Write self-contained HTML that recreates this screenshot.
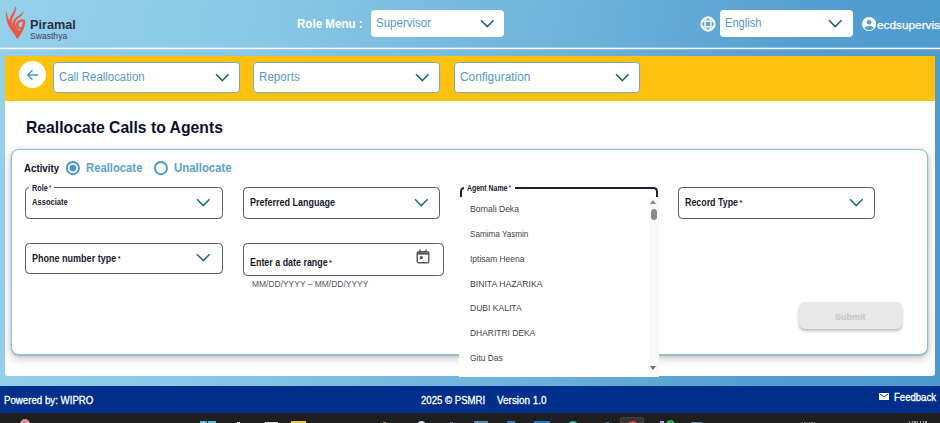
<!DOCTYPE html>
<html><head><meta charset="utf-8">
<style>
*{box-sizing:border-box;margin:0;padding:0}
html,body{width:940px;height:423px;overflow:hidden}
body{font-family:"Liberation Sans",sans-serif;position:relative;background:linear-gradient(100deg,#95d0eb 0%,#8ac8e7 25%,#6fb4db 55%,#559fd0 80%,#4b99cc 100%);}
.a{position:absolute}
.tx{position:absolute;white-space:nowrap;transform-origin:0 50%;line-height:normal}
.sel{position:absolute;background:#fff;border-radius:4px}
.selb{border:1px solid #78aebb}
.field{position:absolute;border:1px solid #5c5f74;border-radius:4.5px;background:#fff;box-shadow:0 0 0.6px 0 rgba(92,95,116,.55)}
</style></head><body>
<div class="a" style="left:0;top:47px;width:940px;height:1px;background:rgba(255,255,255,.3)"></div><div class="a" style="left:0;top:48px;width:940px;height:1px;background:#fff"></div><div class="a" style="left:0;top:49px;width:940px;height:1px;background:rgba(255,255,255,.2)"></div>
<!-- logo -->
<svg class="a" style="left:0;top:2px" width="40" height="42" viewBox="0 0 403 423"><g fill="#ee5540" stroke="#ee5540" stroke-width="5" stroke-linejoin="round">
<path d="M62 98 C58 170 78 235 122 292 C140 315 158 340 176 368 C168 330 150 300 132 272 C100 225 78 170 62 98 Z"/>
<path d="M156 48 C150 95 110 130 96 180 C88 225 108 262 140 296 L158 286 C130 255 112 222 118 182 C128 135 168 100 156 48 Z"/>
<path d="M234 98 C215 135 150 150 132 195 C120 232 138 262 166 292 L184 282 C160 255 144 228 152 198 C166 160 230 145 234 98 Z"/>
<path d="M250 182 C215 172 180 180 166 210 C154 242 172 272 206 272 L208 258 C188 256 178 240 184 220 C192 198 218 192 250 198 Z"/>
<path d="M134 292 L196 288 L178 364 Z" stroke-width="2"/>
<path d="M232 200 L252 196 C252 250 222 305 176 370 C170 350 164 338 158 326 C200 295 230 250 232 200 Z"/>
</g></svg>
<!-- header selects -->
<div class="sel" style="left:370.5px;top:9.8px;width:133.5px;height:27.4px"></div>
<svg class="a" style="left:480px;top:19px" width="15" height="10" viewBox="0 0 15 10"><path d="M1 1.3 L7.3 7.6 L13.6 1.3" fill="none" stroke="#1d6076" stroke-width="1.5"/></svg>
<svg class="a" style="left:699.7px;top:15.5px" width="16" height="16" viewBox="0 0 16 16"><g fill="none" stroke="#fff"><circle cx="8" cy="8" r="6.7" stroke-width="1.8"/><ellipse cx="8" cy="8" rx="2.9" ry="6.7" stroke-width="1.5"/><path d="M2.2 5.3H13.8M2.2 10.7H13.8" stroke-width="1.5"/></g></svg>
<div class="sel" style="left:719.5px;top:9.8px;width:133.5px;height:27.4px"></div>
<svg class="a" style="left:828px;top:19px" width="15" height="10" viewBox="0 0 15 10"><path d="M1 1.3 L7.3 7.6 L13.6 1.3" fill="none" stroke="#1d6076" stroke-width="1.5"/></svg>
<svg class="a" style="left:861.5px;top:17.3px" width="14.2" height="14.2" viewBox="0 0 16 16"><circle cx="8" cy="8" r="8" fill="#fff"/><circle cx="8" cy="6" r="2.7" fill="#57a2d2"/><path d="M2.8 12.3 C4.2 9.6 11.8 9.6 13.2 12.3 C11 15.6 5 15.6 2.8 12.3Z" fill="#57a2d2"/></svg>

<!-- yellow bar -->
<div class="a" style="left:5px;top:56px;width:929.5px;height:45px;background:#fec10e"></div>
<div class="a" style="left:18.7px;top:60.6px;width:27.2px;height:27.2px;border-radius:50%;background:#fff"></div>
<svg class="a" style="left:26.2px;top:69px" width="13" height="12" viewBox="0 0 13 12"><path d="M12 6H2M6.5 1.2L1.7 6L6.5 10.8" fill="none" stroke="#4a93cb" stroke-width="1.4"/></svg>
<div class="sel selb" style="left:53.3px;top:62.2px;width:186.5px;height:31px"></div>
<div class="sel selb" style="left:253.4px;top:62.2px;width:186.5px;height:31px"></div>
<div class="sel selb" style="left:453.5px;top:62.2px;width:186.5px;height:31px"></div>
<svg class="a" style="left:214.6px;top:72.5px" width="15" height="10" viewBox="0 0 15 10"><path d="M1 1.3 L7.3 7.6 L13.6 1.3" fill="none" stroke="#1d6076" stroke-width="1.5"/></svg>
<svg class="a" style="left:414.6px;top:72.5px" width="15" height="10" viewBox="0 0 15 10"><path d="M1 1.3 L7.3 7.6 L13.6 1.3" fill="none" stroke="#1d6076" stroke-width="1.5"/></svg>
<svg class="a" style="left:614.6px;top:72.5px" width="15" height="10" viewBox="0 0 15 10"><path d="M1 1.3 L7.3 7.6 L13.6 1.3" fill="none" stroke="#1d6076" stroke-width="1.5"/></svg>

<!-- white content -->
<div class="a" style="left:5px;top:101px;width:929.5px;height:275px;background:#fff;border-radius:0 0 3px 3px"></div>
<div class="a" style="left:11px;top:149px;width:917px;height:206px;border:1px solid #86bfe0;border-radius:8px;background:#fff;box-shadow:0 1px 2px rgba(0,0,0,.22),0 3px 8px 1px rgba(0,0,0,.2)"></div>
<!-- radios -->
<svg class="a" style="left:65px;top:160px" width="16" height="16" viewBox="0 0 16 16"><circle cx="7.9" cy="8.1" r="6.1" fill="#fff" stroke="#4a96cf" stroke-width="1.9"/><circle cx="7.9" cy="8.1" r="3.4" fill="#4a96cf"/></svg>
<svg class="a" style="left:153px;top:160px" width="16" height="16" viewBox="0 0 16 16"><circle cx="7.9" cy="8.1" r="6.1" fill="#fff" stroke="#4a96cf" stroke-width="1.9"/></svg>

<!-- fields -->
<div class="field" style="left:25px;top:187.2px;width:197.6px;height:32.2px"></div>
<div class="a" style="left:29px;top:186px;width:24.5px;height:4px;background:#fff"></div>
<svg class="a" style="left:195.9px;top:198px" width="15" height="10" viewBox="0 0 15 10"><path d="M1 1.3 L7.3 7.6 L13.6 1.3" fill="none" stroke="#1d6a7c" stroke-width="1.5"/></svg>
<div class="field" style="left:243px;top:187.2px;width:197px;height:32.2px"></div>
<svg class="a" style="left:414px;top:198px" width="15" height="10" viewBox="0 0 15 10"><path d="M1 1.3 L7.3 7.6 L13.6 1.3" fill="none" stroke="#1d6a7c" stroke-width="1.5"/></svg>
<div class="field" style="left:678.2px;top:187.2px;width:197px;height:32.2px"></div>
<svg class="a" style="left:849px;top:198px" width="15" height="10" viewBox="0 0 15 10"><path d="M1 1.3 L7.3 7.6 L13.6 1.3" fill="none" stroke="#1d6a7c" stroke-width="1.5"/></svg>
<div class="field" style="left:25px;top:243.4px;width:197.6px;height:30.2px"></div>
<svg class="a" style="left:195.9px;top:253.2px" width="15" height="10" viewBox="0 0 15 10"><path d="M1 1.3 L7.3 7.6 L13.6 1.3" fill="none" stroke="#1d6a7c" stroke-width="1.5"/></svg>
<div class="field" style="left:243px;top:243.4px;width:201.2px;height:32.3px"></div>
<svg class="a" style="left:416px;top:249.4px" width="14" height="15" viewBox="0 0 14 15"><rect x="1.2" y="2.6" width="11.6" height="11.2" rx="1.6" fill="none" stroke="#555" stroke-width="1.4"/><path d="M1.2 4.4H12.8" stroke="#555" stroke-width="2.4"/><path d="M4 0.6V3M10 0.6V3" stroke="#555" stroke-width="1.5"/><rect x="3.8" y="7.2" width="3" height="3" fill="#555"/></svg>

<!-- agent dropdown -->
<div class="a" style="left:459px;top:189px;width:200px;height:187.5px;background:#fff"></div>
<div class="a" style="left:460px;top:187px;width:198px;height:12px;border:2px solid #1c2140;border-bottom:none;border-radius:4.5px 4.5px 0 0;background:#fff"></div>
<div class="a" style="left:459px;top:196.6px;width:201px;height:4px;background:#fff"></div>
<div class="a" style="left:464.3px;top:185px;width:50.8px;height:5px;background:#fff"></div>
<div class="a" style="left:649px;top:196.6px;width:9.8px;height:179.5px;background:#f9f9f9"></div>
<div class="a" style="left:650.3px;top:199.7px;width:0;height:0;border-left:3.7px solid transparent;border-right:3.7px solid transparent;border-bottom:4.8px solid #8a8a8a"></div>
<div class="a" style="left:650.6px;top:208.9px;width:6.5px;height:11.6px;border-radius:3.2px;background:#8c8c8c"></div>
<div class="a" style="left:650.3px;top:365.7px;width:0;height:0;border-left:3.7px solid transparent;border-right:3.7px solid transparent;border-top:4.8px solid #707070"></div>

<!-- submit -->
<div class="a" style="left:798.7px;top:302px;width:103.3px;height:27px;border-radius:6px;background:#e8e8e8;box-shadow:0 2px 3px rgba(0,0,0,.28)"></div>

<!-- footer -->
<div class="a" style="left:0;top:386px;width:940px;height:27px;background:#002f8b"></div>
<svg class="a" style="left:879.3px;top:393px" width="10.2" height="7.2" viewBox="0 0 10 7"><rect width="10" height="7" rx="0.6" fill="#fff"/><path d="M1 1L5 3.6L9 1" fill="none" stroke="#002f8b" stroke-width="0.9"/></svg>
<!-- taskbar -->
<div class="a" style="left:0;top:413px;width:940px;height:10px;background:#1f1f1f"></div>
<div class="a" style="left:19.8px;top:418.6px;width:10px;height:10px;border-radius:50%;background:#e98aa0"></div>
<div class="a" style="left:199.5px;top:421.3px;width:7.5px;height:3px;background:#4cc2d8"></div>
<div class="a" style="left:208px;top:421.3px;width:7.5px;height:3px;background:#4cc2d8"></div>
<div class="a" style="left:236.5px;top:421.5px;width:3.5px;height:3px;background:#ddd"></div>
<div class="a" style="left:264.5px;top:421.5px;width:13px;height:3px;background:#d8d8d8"></div>
<div class="a" style="left:291.2px;top:421.3px;width:14.5px;height:3px;background:#e8c53a"></div>
<div class="a" style="left:382.5px;top:421.8px;width:3px;height:2px;background:#c8862a"></div>
<div class="a" style="left:416.5px;top:421px;width:9.5px;height:9px;border-radius:50%;background:#c9d4ee"></div>
<div class="a" style="left:450px;top:421.8px;width:2.5px;height:2px;background:#3a8ad0"></div>
<div class="a" style="left:473.5px;top:421.3px;width:14.5px;height:3px;background:#5a86a8"></div>
<div class="a" style="left:506.5px;top:421.3px;width:8px;height:3px;background:#2f7fc8"></div>
<div class="a" style="left:533.8px;top:421px;width:16.5px;height:3px;background:#1478d4"></div>
<div class="a" style="left:568px;top:420.8px;width:10px;height:9px;border-radius:50%;background:#35b8b0"></div>
<div class="a" style="left:605.5px;top:421.6px;width:3px;height:2px;background:#3a8ad0"></div>
<div class="a" style="left:619.5px;top:416.5px;width:24.5px;height:8px;border-radius:3px;background:#333;border:1px solid #444"></div>
<div class="a" style="left:628px;top:420.5px;width:10px;height:9px;border-radius:50%;background:#d8433c"></div>
<div class="a" style="left:659.5px;top:421.3px;width:4px;height:3px;background:#b8a8e8"></div>
<div class="a" style="left:665.5px;top:419.5px;width:9px;height:9px;border-radius:50%;background:#22b14c"></div>
<div class="a" style="left:690.5px;top:421.5px;width:11.5px;height:3px;background:#4a86b8"></div>
<div class="a" style="left:800.5px;top:421.6px;width:16px;height:2px;background:repeating-linear-gradient(90deg,#aaa 0 1.2px,#1f1f1f 1.2px 2.6px);opacity:.8"></div>
<div class="a" style="left:909px;top:421.2px;width:19px;height:2px;background:repeating-linear-gradient(90deg,#bbb 0 1.3px,#1f1f1f 1.3px 2.7px);opacity:.85"></div>
<div id="t_pir" class="tx" style="left:29.60px;top:17.29px;font-size:13.60px;font-weight:bold;color:#2b2f44;transform:scaleX(0.9323)">Piramal</div>
<div id="t_swa" class="tx" style="left:29.60px;top:30.96px;font-size:9.00px;font-weight:normal;color:#3b4258;transform:scaleX(0.9531)">Swasthya</div>
<div id="t_role" class="tx" style="left:297.30px;top:16.23px;font-size:13.00px;font-weight:bold;color:#ffffff;transform:scaleX(0.8918)">Role Menu :</div>
<div id="t_sup" class="tx" style="left:375.60px;top:15.69px;font-size:12.50px;font-weight:normal;color:#5597cd;transform:scaleX(0.9222)">Supervisor</div>
<div id="t_eng" class="tx" style="left:724.60px;top:16.09px;font-size:12.50px;font-weight:normal;color:#5597cd;transform:scaleX(0.8878)">English</div>
<div id="t_ecd" class="tx" style="left:876.60px;top:19.19px;font-size:11.50px;font-weight:normal;color:#ffffff;transform:scaleX(1.0266);-webkit-text-stroke:0.25px #ffffff">ecdsupervisor</div>
<div id="t_call" class="tx" style="left:59.20px;top:69.77px;font-size:12.30px;font-weight:normal;color:#5597cd;transform:scaleX(0.9276)">Call Reallocation</div>
<div id="t_rep" class="tx" style="left:259.40px;top:69.77px;font-size:12.30px;font-weight:normal;color:#5597cd;transform:scaleX(0.9451)">Reports</div>
<div id="t_conf" class="tx" style="left:459.90px;top:69.77px;font-size:12.30px;font-weight:normal;color:#5597cd;transform:scaleX(0.9623)">Configuration</div>
<div id="t_h1" class="tx" style="left:26.00px;top:117.56px;font-size:16.40px;font-weight:bold;color:#0d0f2b;transform:scaleX(0.9593)">Reallocate Calls to Agents</div>
<div id="t_act" class="tx" style="left:23.90px;top:162.75px;font-size:10.00px;font-weight:bold;color:#111122;transform:scaleX(0.9716)">Activity</div>
<div id="t_real" class="tx" style="left:86.40px;top:161.44px;font-size:12.00px;font-weight:bold;color:#5a9fd0;transform:scaleX(0.9395)">Reallocate</div>
<div id="t_unal" class="tx" style="left:174.20px;top:161.44px;font-size:12.00px;font-weight:bold;color:#5a9fd0;transform:scaleX(0.9508)">Unallocate</div>
<div id="t_rolel" class="tx" style="left:31.80px;top:183.20px;font-size:8.40px;font-weight:bold;color:#222233;transform:scaleX(0.8647)">Role<span style="font-size:6.7px;position:relative;top:-1.0px;margin-left:1.6px">*</span></div>
<div id="t_assoc" class="tx" style="left:31.80px;top:197.12px;font-size:8.60px;font-weight:bold;color:#1a1a2e;transform:scaleX(0.8816)">Associate</div>
<div id="t_phone" class="tx" style="left:31.80px;top:252.95px;font-size:10.00px;font-weight:bold;color:#1a1a2e;transform:scaleX(0.9019)">Phone number type<span style="font-size:8.0px;position:relative;top:-1.2px;margin-left:1.6px">*</span></div>
<div id="t_pref" class="tx" style="left:249.60px;top:196.65px;font-size:10.00px;font-weight:bold;color:#1a1a2e;transform:scaleX(0.9007)">Preferred Language</div>
<div id="t_date" class="tx" style="left:249.60px;top:256.75px;font-size:10.00px;font-weight:bold;color:#1a1a2e;transform:scaleX(0.8904)">Enter a date range<span style="font-size:8.0px;position:relative;top:-1.2px;margin-left:1.6px">*</span></div>
<div id="t_mm" class="tx" style="left:251.80px;top:278.90px;font-size:8.40px;font-weight:normal;color:#555555;transform:scaleX(1.0090)">MM/DD/YYYY &ndash; MM/DD/YYYY</div>
<div id="t_agent" class="tx" style="left:467.10px;top:183.20px;font-size:8.40px;font-weight:bold;color:#222233;transform:scaleX(0.8266)">Agent Name<span style="font-size:6.7px;position:relative;top:-1.0px;margin-left:1.6px">*</span></div>
<div id="t_o1" class="tx" style="left:470.40px;top:203.92px;font-size:8.60px;font-weight:normal;color:#444444;transform:scaleX(0.9938)">Bornali Deka</div>
<div id="t_o2" class="tx" style="left:470.40px;top:228.92px;font-size:8.60px;font-weight:normal;color:#444444;transform:scaleX(0.9453)">Samima Yasmin</div>
<div id="t_o3" class="tx" style="left:470.40px;top:253.72px;font-size:8.60px;font-weight:normal;color:#444444;transform:scaleX(0.9816)">Iptisam Heena</div>
<div id="t_o4" class="tx" style="left:470.40px;top:278.72px;font-size:8.60px;font-weight:normal;color:#444444;transform:scaleX(1.0090)">BINITA HAZARIKA</div>
<div id="t_o5" class="tx" style="left:470.40px;top:303.22px;font-size:8.60px;font-weight:normal;color:#444444;transform:scaleX(0.9941)">DUBI KALITA</div>
<div id="t_o6" class="tx" style="left:470.40px;top:327.92px;font-size:8.60px;font-weight:normal;color:#444444;transform:scaleX(0.9823)">DHARITRI DEKA</div>
<div id="t_o7" class="tx" style="left:470.40px;top:352.92px;font-size:8.60px;font-weight:normal;color:#444444;transform:scaleX(0.9750)">Gitu Das</div>
<div id="t_rec" class="tx" style="left:684.80px;top:197.15px;font-size:10.00px;font-weight:bold;color:#1a1a2e;transform:scaleX(0.8856)">Record Type<span style="font-size:8.0px;position:relative;top:-1.2px;margin-left:1.6px">*</span></div>
<div id="t_sub" class="tx" style="left:835.10px;top:310.91px;font-size:9.60px;font-weight:bold;color:#c6c6c6;transform:scaleX(0.9349)">Submit</div>
<div id="t_pow" class="tx" style="left:3.80px;top:393.72px;font-size:10.70px;font-weight:normal;color:#ffffff;transform:scaleX(0.9068);-webkit-text-stroke:0.30px #ffffff">Powered by: WIPRO</div>
<div id="t_2025" class="tx" style="left:420.90px;top:393.72px;font-size:10.70px;font-weight:normal;color:#ffffff;transform:scaleX(0.8987);-webkit-text-stroke:0.30px #ffffff">2025 &copy; PSMRI</div>
<div id="t_ver" class="tx" style="left:496.80px;top:393.72px;font-size:10.70px;font-weight:normal;color:#ffffff;transform:scaleX(0.9274);-webkit-text-stroke:0.30px #ffffff">Version 1.0</div>
<div id="t_feed" class="tx" style="left:894.00px;top:392.27px;font-size:10.20px;font-weight:normal;color:#ffffff;transform:scaleX(0.9385);-webkit-text-stroke:0.30px #ffffff">Feedback</div>
</body></html>
